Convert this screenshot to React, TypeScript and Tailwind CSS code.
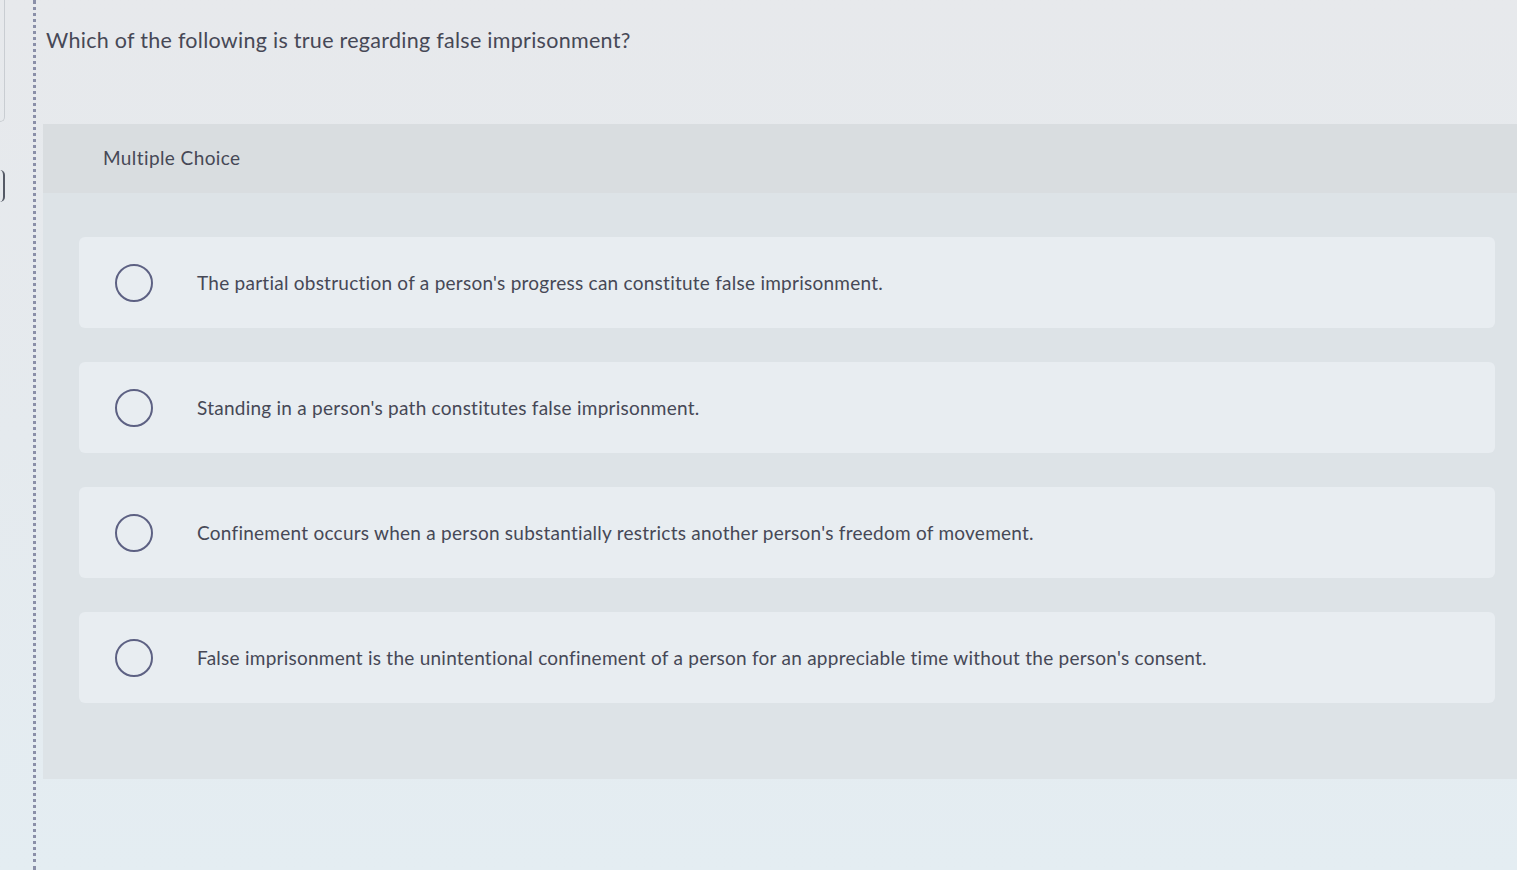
const OPTIONS = [
  "The partial obstruction of a person's progress can constitute false imprisonment.",
  "Standing in a person's path constitutes false imprisonment.",
  "Confinement occurs when a person substantially restricts another person's freedom of movement.",
  "False imprisonment is the unintentional confinement of a person for an appreciable time without the person's consent.",
];

export default function App() {
  return (
    <div className="min-h-screen flex bg-gradient-to-b from-[#e7e9ec] via-[#e5eaee] to-[#e4edf2] font-['Lato',sans-serif] text-[#464856]">
      {/* left edge strip */}
      <div className="w-[33px] flex flex-col">
        <div className="h-[122px] w-[5px] rounded-br-md border-r border-b border-[#c9cdd2]" />
        <div className="mt-[48px] h-[32px] w-[5px] rounded-r-full border-r-2 border-[#555a66]" />
      </div>
      <div className="border-l-[3px] border-dotted border-[#8a8fa8]" />

      <main className="flex-1 pl-[7px]">
        <h1 className="pl-[3px] pt-[26px] text-[21.5px] leading-[28px] tracking-[0.28px]">
          Which of the following is true regarding false imprisonment?
        </h1>

        <section className="mt-[70px] bg-[#dde3e7]">
          <div className="h-[69px] flex items-center pl-[60px] bg-[#d9dde0] text-[19px] tracking-[0.4px]">
            Multiple Choice
          </div>
          <div className="pl-[36px] pr-[22px] pt-[44px] pb-[76px] flex flex-col gap-[34px]">
            {OPTIONS.map((text) => (
              <div
                key={text}
                className="h-[91px] flex items-center pl-[36px] rounded-md bg-[#e8edf1]"
              >
                <span className="w-[38px] h-[38px] shrink-0 rounded-full border-2 border-[#5d6183]" />
                <span className="ml-[44px] pt-[2px] text-[19px] tracking-[0.25px]">{text}</span>
              </div>
            ))}
          </div>
        </section>
      </main>
    </div>
  );
}
